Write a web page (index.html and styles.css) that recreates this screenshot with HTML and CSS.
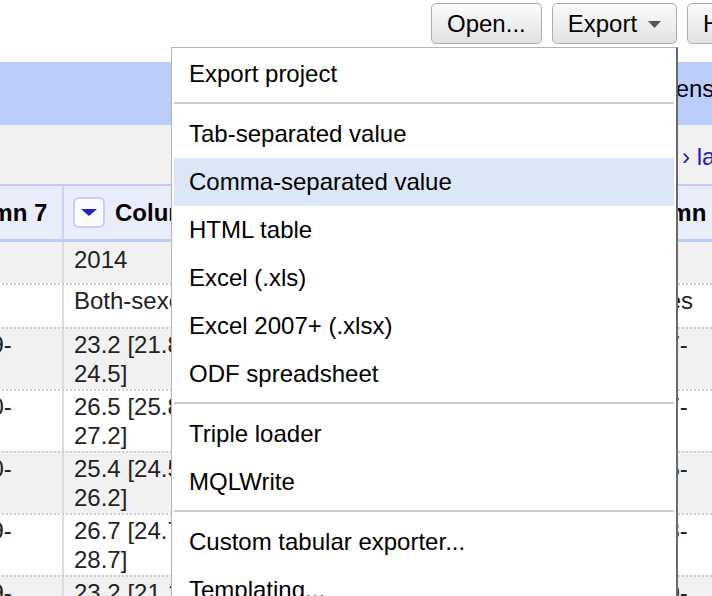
FILE: index.html
```html
<!DOCTYPE html>
<html lang="en">
<head>
<meta charset="utf-8">
<title>Export menu</title>
<link rel="stylesheet" href="styles.css">
</head>
<body>
<div class="toolbar">
  <button class="btn">Open...</button>
  <button class="btn">Export<svg class="caret" width="13" height="7" viewBox="0 0 13 7"><polygon points="0,0 13,0 6.5,7" fill="#555"/></svg></button>
  <button class="btn">Help</button>
</div>
<div class="band"><span class="band-text">Extensions</span></div>
<div class="pager"><span class="pager-links">next › last »</span></div>
<div class="grid">
  <div class="hdr">
    <div class="hcell c1"><span class="dd"><svg width="16" height="7" viewBox="0 0 16 7"><polygon points="0,0 16,0 8,7" fill="#1f1fc4"/></svg></span><span class="hname">Column 7</span></div>
    <div class="hcell c2"><span class="dd"><svg width="16" height="7" viewBox="0 0 16 7"><polygon points="0,0 16,0 8,7" fill="#1f1fc4"/></svg></span><span class="hname">Column 7</span></div>
    <div class="hcell c3"><span class="dd"><svg width="16" height="7" viewBox="0 0 16 7"><polygon points="0,0 16,0 8,7" fill="#1f1fc4"/></svg></span><span class="hname">Column 8</span></div>
  </div>
  <div class="row row-first odd">
    <div class="cell c1"></div>
    <div class="cell c2">2014</div>
    <div class="cell c3"></div>
  </div>
  <div class="row row-single even">
    <div class="cell c1"></div>
    <div class="cell c2">Both-sexes</div>
    <div class="cell c3">Both-sexes</div>
  </div>
  <div class="row odd">
    <div class="cell c1">21.3 [19.9-<br>22.8]</div>
    <div class="cell c2">23.2 [21.8-<br>24.5]</div>
    <div class="cell c3">22.9 [21.7-<br>24.2]</div>
  </div>
  <div class="row even">
    <div class="cell c1">24.6 [23.0-<br>26.3]</div>
    <div class="cell c2">26.5 [25.8-<br>27.2]</div>
    <div class="cell c3">28.3 [27.7-<br>28.9]</div>
  </div>
  <div class="row odd">
    <div class="cell c1">24.1 [23.0-<br>25.2]</div>
    <div class="cell c2">25.4 [24.5-<br>26.2]</div>
    <div class="cell c3">26.6 [25.5-<br>27.7]</div>
  </div>
  <div class="row even">
    <div class="cell c1">24.7 [22.9-<br>26.6]</div>
    <div class="cell c2">26.7 [24.7-<br>28.7]</div>
    <div class="cell c3">28.7 [26.3-<br>31.2]</div>
  </div>
  <div class="row odd">
    <div class="cell c1">21.2 [19.9-<br>22.5]</div>
    <div class="cell c2">23.2 [21.1-<br>25.4]</div>
    <div class="cell c3">25.1 [23.0-<br>27.2]</div>
  </div>
</div>

<div class="menu">
  <div class="menu-item">Export project</div>
  <div class="menu-sep"></div>
  <div class="menu-item">Tab-separated value</div>
  <div class="menu-item is-active">Comma-separated value</div>
  <div class="menu-item">HTML table</div>
  <div class="menu-item">Excel (.xls)</div>
  <div class="menu-item">Excel 2007+ (.xlsx)</div>
  <div class="menu-item">ODF spreadsheet</div>
  <div class="menu-sep"></div>
  <div class="menu-item">Triple loader</div>
  <div class="menu-item">MQLWrite</div>
  <div class="menu-sep"></div>
  <div class="menu-item">Custom tabular exporter...</div>
  <div class="menu-item">Templating...</div>
</div>
</body>
</html>
```
FILE: styles.css
```css
html, body {
  margin: 0;
  padding: 0;
}
body {
  width: 712px;
  height: 596px;
  overflow: hidden;
  position: relative;
  background: #fff;
  font-family: "Liberation Sans", Arial, sans-serif;
  font-size: 24px;
  color: #000;
}

/* toolbar */
.toolbar {
  height: 62px;
  box-sizing: border-box;
  display: flex;
  align-items: flex-start;
  gap: 10px;
  padding: 3px 0 0 431px;
  white-space: nowrap;
  overflow: hidden;
}
.btn {
  flex-shrink: 0;
  height: 41px;
  box-sizing: border-box;
  display: flex;
  align-items: center;
  padding: 0 15px;
  border: 1px solid #adadad;
  border-radius: 5px;
  background: linear-gradient(#fbfbfb, #e2e2e2);
  font-family: "Liberation Sans", Arial, sans-serif;
  font-size: 24px;
  color: #000;
}
.caret {
  margin-left: 11px;
  margin-top: 2px;
}

/* blue band */
.band {
  height: 63px;
  box-sizing: border-box;
  background: #bccdfb;
  padding: 12px 0 0 641px;
  line-height: 29px;
  white-space: nowrap;
}

/* pager */
.pager {
  height: 59px;
  box-sizing: border-box;
  background: #f1f1f1;
  padding: 17px 0 0 630px;
  line-height: 29px;
  white-space: nowrap;
  color: #1b1bc9;
}

/* grid */
.grid {
  margin-left: -113px;
  width: 960px;
}
.hdr {
  display: flex;
  height: 58px;
  box-sizing: border-box;
  background: #e9ecf9;
  border-top: 2px solid #bccdfb;
  border-bottom: 3px solid #bccdfb;
}
.c1 { width: 177px; }
.c2 { width: 499px; }
.c3 { width: 250px; }
.hcell {
  box-sizing: border-box;
  display: flex;
  align-items: center;
  gap: 10px;
  padding-left: 9px;
  border-right: 2px solid #c8d3f7;
  white-space: nowrap;
}
.hcell.c3 {
  border-right: none;
  padding-left: 12px;
}
.dd {
  width: 32px;
  height: 31px;
  box-sizing: border-box;
  flex-shrink: 0;
  display: flex;
  align-items: center;
  justify-content: center;
  border: 2px solid #c6d0f6;
  border-radius: 6px;
  background: #fbfcff;
}
.hname {
  font-weight: bold;
  color: #000;
}

.row {
  display: flex;
  height: 62px;
  box-sizing: border-box;
  border-top: 2px dotted #cfcfcf;
}
.row.odd { background: #f1f1f1; }
.row.even { background: #fff; }
.row-first {
  height: 41px;
  border-top: none;
}
.row-first .cell { padding-top: 4px; }
.row-single { height: 44px; }
.cell {
  box-sizing: border-box;
  padding: 2px 10px 0;
  line-height: 28.5px;
  color: #222;
  white-space: nowrap;
  border-right: 2px solid #dcdcdc;
}
.cell.c3 { border-right: none; }

/* menu */
.menu {
  position: absolute;
  left: 171px;
  top: 47px;
  width: 507px;
  height: 580px;
  box-sizing: border-box;
  background: #fff;
  border: 1px solid #b4b4b4;
  border-right: 2px solid #6a6a6a;
  border-bottom: none;
  padding: 2px 2px 0;
  z-index: 10;
}
.menu-item {
  height: 48px;
  line-height: 48px;
  padding-left: 15px;
  white-space: nowrap;
  color: #000;
}
.menu-item.is-active {
  background: #dbe6f7;
}
.menu-sep {
  height: 2px;
  background: #cccccc;
  margin: 4px 0 6px;
}
```
